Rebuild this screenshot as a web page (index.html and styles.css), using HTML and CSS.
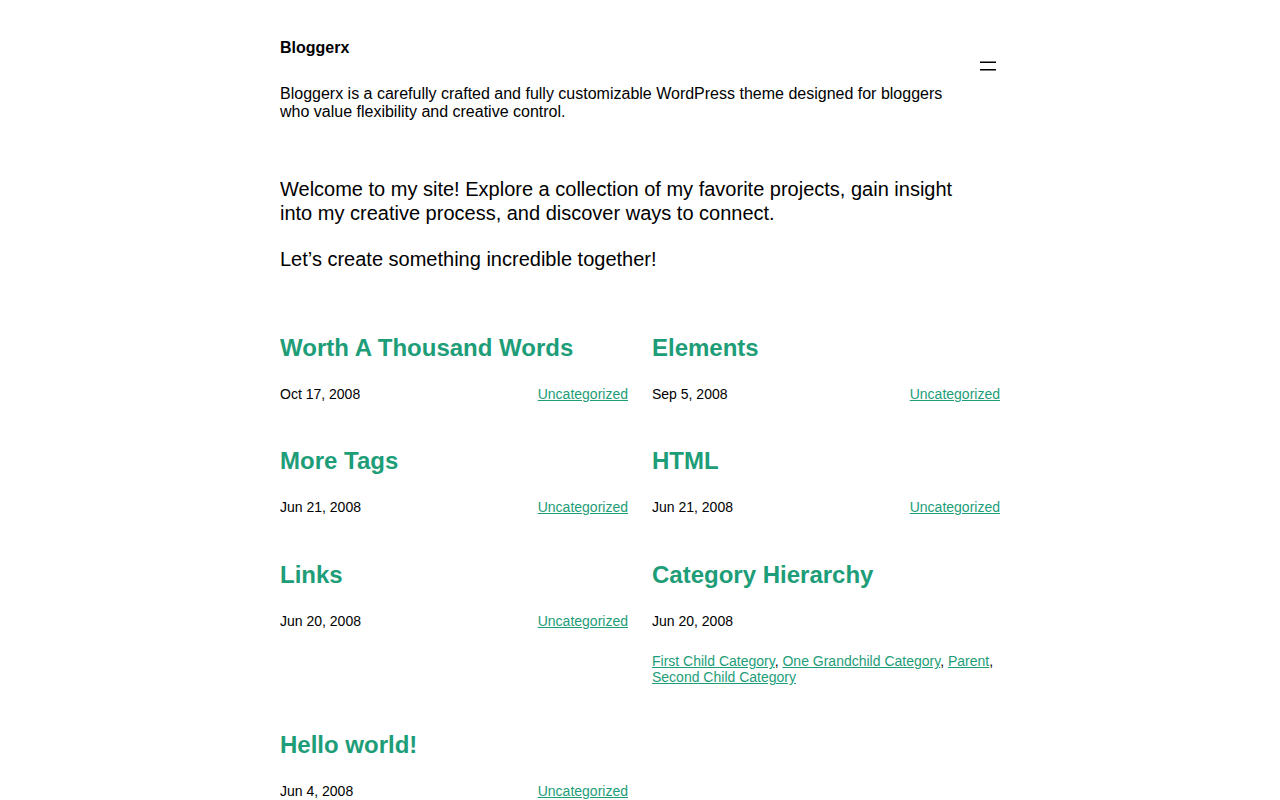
FILE: index.html
```html
<!DOCTYPE html>
<html lang="en">
<head>
<meta charset="utf-8">
<title>Bloggerx</title>
<link rel="stylesheet" href="styles.css">
</head>
<body>
<div class="page">
  <header class="site-header">
    <div class="branding">
      <p class="site-title">Bloggerx</p>
      <p class="site-desc">Bloggerx is a carefully crafted and fully customizable WordPress theme designed for bloggers who value flexibility and creative control.</p>
    </div>
    <button class="menu-btn" aria-label="Open menu">
      <svg width="24" height="24" viewBox="0 0 24 24"><rect x="4" y="7.5" width="16" height="1.5"></rect><rect x="4" y="15" width="16" height="1.5"></rect></svg>
    </button>
  </header>

  <section class="intro">
    <p>Welcome to my site! Explore a collection of my favorite projects, gain insight into my creative process, and discover ways to connect.</p>
    <p>Let’s create something incredible together!</p>
  </section>

  <main class="posts">
    <article class="post">
      <h2 class="post-title"><a href="#">Worth A Thousand Words</a></h2>
      <div class="meta"><span class="date">Oct 17, 2008</span><span class="cats"><a href="#">Uncategorized</a></span></div>
    </article>
    <article class="post">
      <h2 class="post-title"><a href="#">Elements</a></h2>
      <div class="meta"><span class="date">Sep 5, 2008</span><span class="cats"><a href="#">Uncategorized</a></span></div>
    </article>
    <article class="post">
      <h2 class="post-title"><a href="#">More Tags</a></h2>
      <div class="meta"><span class="date">Jun 21, 2008</span><span class="cats"><a href="#">Uncategorized</a></span></div>
    </article>
    <article class="post">
      <h2 class="post-title"><a href="#">HTML</a></h2>
      <div class="meta"><span class="date">Jun 21, 2008</span><span class="cats"><a href="#">Uncategorized</a></span></div>
    </article>
    <article class="post">
      <h2 class="post-title"><a href="#">Links</a></h2>
      <div class="meta"><span class="date">Jun 20, 2008</span><span class="cats"><a href="#">Uncategorized</a></span></div>
    </article>
    <article class="post">
      <h2 class="post-title"><a href="#">Category Hierarchy</a></h2>
      <div class="meta"><span class="date">Jun 20, 2008</span><span class="cats"><a href="#">First Child Category</a>, <a href="#">One Grandchild Category</a>, <a href="#">Parent</a>, <a href="#">Second Child Category</a></span></div>
    </article>
    <article class="post">
      <h2 class="post-title"><a href="#">Hello world!</a></h2>
      <div class="meta"><span class="date">Jun 4, 2008</span><span class="cats"><a href="#">Uncategorized</a></span></div>
    </article>
  </main>
</div>
</body>
</html>
```

FILE: styles.css
```css
html, body {
  margin: 0;
  padding: 0;
  background: #fff;
}
body {
  font-family: "Liberation Sans", Arial, sans-serif;
  color: #000;
}
.page {
  width: 720px;
  margin: 0 auto;
  padding-top: 38px;
}
.site-header {
  display: flex;
  gap: 24px;
  align-items: flex-start;
}
.branding {
  flex: 1;
}
.site-title {
  margin: 0;
  font-size: 16px;
  font-weight: bold;
  line-height: 20px;
}
.site-desc {
  margin: 27px 0 0;
  font-size: 16px;
  line-height: 18px;
}
.menu-btn {
  margin-top: 16px;
  width: 24px;
  height: 24px;
  padding: 0;
  border: 0;
  background: none;
  color: #000;
  cursor: pointer;
}
.menu-btn svg {
  display: block;
  fill: currentColor;
}
.intro {
  margin-top: 56px;
}
.intro p {
  margin: 0 0 22px;
  font-size: 20px;
  line-height: 24px;
  max-width: 680px;
}
.intro p:last-child {
  margin-bottom: 0;
}
.posts {
  margin-top: 62px;
  display: grid;
  grid-template-columns: 1fr 1fr;
  column-gap: 24px;
  row-gap: 44.4px;
  padding-bottom: 40px;
}
.post-title {
  margin: 0;
  font-size: 24px;
  font-weight: bold;
  line-height: 29px;
}
.post-title a {
  color: #1d9d78;
  text-decoration: none;
}
.meta {
  margin-top: 24px;
  display: flex;
  flex-wrap: wrap;
  justify-content: space-between;
  row-gap: 24.5px;
  font-size: 14px;
  line-height: 16px;
}
.meta a {
  color: #1d9d78;
  text-decoration: underline;
}
```
